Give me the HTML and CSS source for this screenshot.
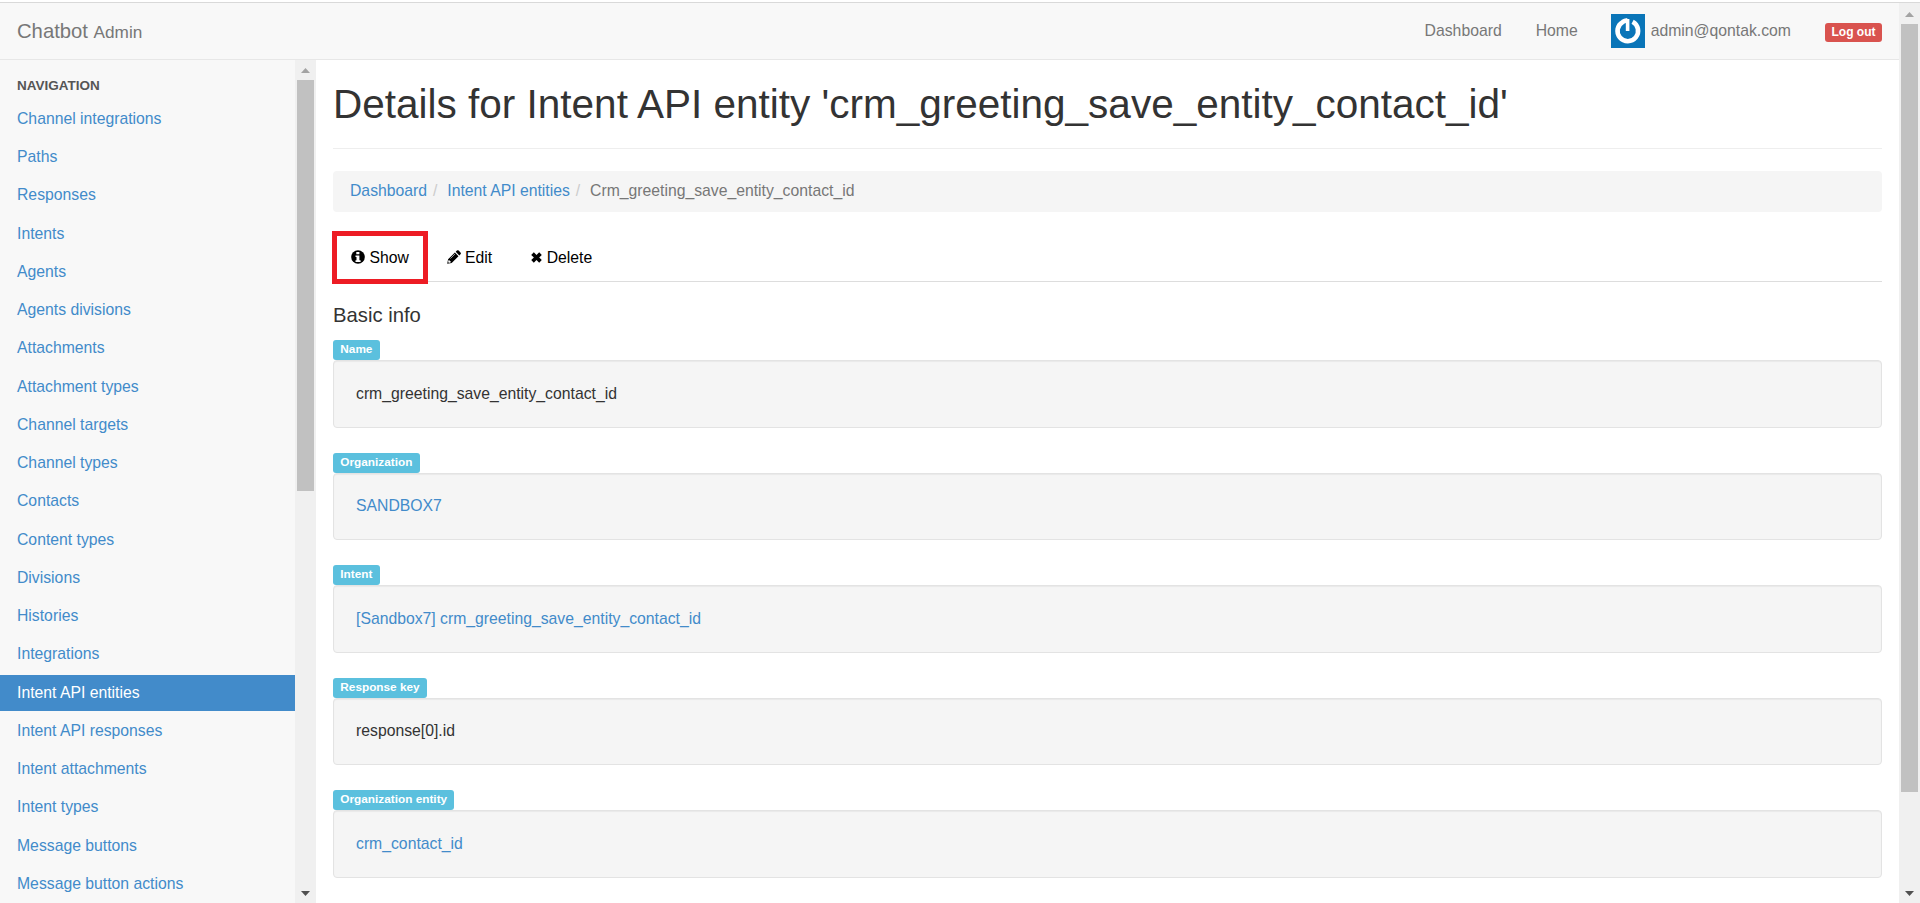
FILE: index.html
```html
<!DOCTYPE html>
<html lang="en">
<head>
<meta charset="utf-8">
<title>Chatbot Admin</title>
<link rel="stylesheet" href="styles.css">
</head>
<body>
<div class="window">
  <div class="page">
    <header class="navbar">
      <a class="brand">Chatbot <small>Admin</small></a>
      <nav class="top-links">
        <a class="link-dashboard">Dashboard</a>
        <a class="link-home">Home</a>
        <a class="user">
          <svg class="avatar" viewBox="0 0 34 34"><rect width="34" height="34" fill="#0a75b8"/><path d="M21.600 7.800A10.300 10.300 0 1 1 11.800 7.900Q13.500 6.600 16.500 6.200" fill="none" stroke="#fff" stroke-width="4.600"/><path d="M16.600 5v12" fill="none" stroke="#fff" stroke-width="3.600"/></svg>
          <span class="email">admin@qontak.com</span>
        </a>
        <a class="logout">Log out</a>
      </nav>
    </header>
    <div class="columns">
      <aside class="sidebar">
        <div class="nav-heading">NAVIGATION</div>
        <ul class="nav-list">
          <li>Channel integrations</li>
          <li>Paths</li>
          <li>Responses</li>
          <li>Intents</li>
          <li>Agents</li>
          <li>Agents divisions</li>
          <li>Attachments</li>
          <li>Attachment types</li>
          <li>Channel targets</li>
          <li>Channel types</li>
          <li>Contacts</li>
          <li>Content types</li>
          <li>Divisions</li>
          <li>Histories</li>
          <li>Integrations</li>
          <li class="active">Intent API entities</li>
          <li>Intent API responses</li>
          <li>Intent attachments</li>
          <li>Intent types</li>
          <li>Message buttons</li>
          <li>Message button actions</li>
        </ul>
      </aside>
      <div class="scrollbar side-scroll">
        <svg class="arrow" viewBox="0 0 9 5"><path d="M0 5L4.500 0L9 5z" fill="#a3a3a3"/></svg>
        <div class="thumb"></div>
        <svg class="arrow" viewBox="0 0 9 5"><path d="M0 0L4.500 5L9 0z" fill="#505050"/></svg>
      </div>
      <main class="content">
        <h1><span class="title">Details for Intent API entity 'crm_greeting_save_entity_contact_id'</span></h1>
        <div class="breadcrumb">
          <a>Dashboard</a><i>/</i><a>Intent API entities</a><i>/</i><span>Crm_greeting_save_entity_contact_id</span>
        </div>
        <div class="tabs">
          <a class="tab tab-show"><svg class="ico" viewBox="0 0 14 14"><circle cx="7" cy="7" r="6.800"/><path d="M5.300 2h3.100v2.200H5.300zM4.500 5.400h3.900v4.800h1.200v1.700H4.500v-1.700h1V7.100h-1z" fill="#fff"/></svg><span>Show</span></a>
          <a class="tab tab-edit"><svg class="ico" viewBox="0 0 14 14"><path d="M.2 13.800l.9-4.500 6.800-6.700 3.600 3.600-6.800 6.700zM8.700 1.800l1.200-1.200q.9-.9 1.800 0l1.800 1.800q.9.900 0 1.800l-1.200 1.200z"/><path d="M1.900 10.300l1.800 1.800-1.800.500-.5-.500zM3.400 8.600l4.700-4.700" fill="#fff" stroke="#fff" stroke-width=".6"/></svg><span>Edit</span></a>
          <a class="tab tab-delete"><svg class="ico ico-x" viewBox="0 0 11 11"><path d="M2.800.3L5.500 3 8.200.3 10.800 2.900 8.200 5.500l2.600 2.600-2.600 2.600L5.500 8.100l-2.700 2.600L.2 8.100l2.700-2.600L.2 2.900z"/></svg><span>Delete</span></a>
        </div>
        <h2>Basic info</h2>
        <section class="field"><b class="label"><span>Name</span></b><div class="well"><span>crm_greeting_save_entity_contact_id</span></div></section>
        <section class="field"><b class="label"><span>Organization</span></b><div class="well"><a>SANDBOX7</a></div></section>
        <section class="field"><b class="label"><span>Intent</span></b><div class="well"><a>[Sandbox7] crm_greeting_save_entity_contact_id</a></div></section>
        <section class="field"><b class="label"><span>Response key</span></b><div class="well"><span>response[0].id</span></div></section>
        <section class="field"><b class="label"><span>Organization entity</span></b><div class="well"><a>crm_contact_id</a></div></section>
      </main>
    </div>
  </div>
  <div class="scrollbar page-scroll">
    <svg class="arrow" viewBox="0 0 9 5"><path d="M0 5L4.500 0L9 5z" fill="#a3a3a3"/></svg>
    <div class="thumb"></div>
    <svg class="arrow" viewBox="0 0 9 5"><path d="M0 0L4.500 5L9 0z" fill="#505050"/></svg>
  </div>
</div>
</body>
</html>
```
FILE: styles.css
```css
* { box-sizing: border-box; }
html, body { margin: 0; height: 903px; overflow: hidden; }
body {
  padding-top: 2px;
  background: #fff;
  color: #333;
  font: 15.75px/22.5px "Liberation Sans", Arial, sans-serif;
}
.window { display: flex; height: 901px; border-top: 1px solid #d9d9d9; }
.page { flex: 1; min-width: 0; display: flex; flex-direction: column; }
.navbar {
  display: flex;
  justify-content: space-between;
  align-items: center;
  height: 57px;
  padding: 0 17px;
  background: #f8f8f8;
  border-bottom: 1px solid #e7e7e7;
  color: #777;
  flex: none;
}
.brand { font-size: 20.25px; padding-top: 1px; }
.brand small { font-size: 17.2px; }
.top-links { display: flex; align-items: center; }
.link-home { margin: 0 33px 0 34px; }
.user { display: flex; align-items: center; gap: 6px; }
.avatar { width: 34px; height: 34px; }
.logout {
  margin: 3px 0 0 34px;
  width: 57px;
  height: 19px;
  border-radius: 3px;
  background: #d9534f;
  color: #fff;
  font-size: 12px;
  font-weight: bold;
  line-height: 18px;
  text-align: center;
}
.columns { display: flex; flex: 1; min-height: 0; }
.sidebar { width: 295px; background: #f8f8f8; overflow: hidden; flex: none; }
.nav-heading {
  height: 41.25px;
  padding: 15px 17px 0;
  color: #555;
  font-size: 13.5px;
  font-weight: bold;
}
.nav-list { list-style: none; margin: 0; padding: 0; color: #428bca; }
.nav-list li { height: 36px; margin-bottom: 2.25px; padding: 6.6px 17px 0; }
.nav-list .active { background: #428bca; color: #fff; }
.scrollbar {
  display: flex;
  flex-direction: column;
  align-items: center;
  width: 21px;
  background: #f0f0f0;
  flex: none;
}
.arrow { width: 9px; height: 5px; display: block; flex: none; }
.thumb { width: 17px; background: #c1c1c1; }
.scrollbar .arrow:last-child { margin-top: auto; }
.side-scroll { padding: 8px 0 7px; }
.side-scroll .thumb { height: 411px; margin-top: 7px; }
.page-scroll { padding: 9px 0 7px; }
.page-scroll .thumb { height: 768px; margin-top: 7px; }
.content { flex: 1; min-width: 0; padding: 0 17px; }
h1 {
  height: 89px;
  margin: 0 0 22px;
  padding-top: 22px;
  border-bottom: 1px solid #eee;
  font-size: 40.5px;
  font-weight: normal;
  line-height: 44.5px;
  white-space: nowrap;
}
.breadcrumb {
  display: flex;
  height: 41px;
  padding: 9px 17px 8px;
  border-radius: 4px;
  background: #f5f5f5;
  color: #777;
}
.breadcrumb i { width: 20.2px; padding-left: 6px; color: #ccc; font-style: normal; }
a { color: inherit; }
.breadcrumb a, .well a { color: #428bca; }
.tabs {
  display: flex;
  height: 70px;
  padding-top: 19px;
  border-bottom: 1px solid #ddd;
  color: #000;
}
.tab { display: flex; align-items: center; gap: 4.5px; height: 53px; }
.tab span { padding-top: 1px; }
.tab-show {
  width: 96px;
  margin-left: -1px;
  padding-left: 14px;
  border: 5px solid #ed1c24;
  z-index: 1;
}
.tab-edit { margin-left: 18.5px; }
.tab-delete { margin-left: 39px; }
.ico { width: 14px; height: 14px; flex: none; margin-bottom: 1px; }
.ico-x { width: 11px; height: 11px; margin: 0; }
h2 {
  height: 58px;
  margin: 0;
  padding-top: 21px;
  font-size: 20.25px;
  font-weight: normal;
  line-height: 24px;
}
.field { height: 112.5px; }
.label {
  display: block;
  width: fit-content;
  height: 20.25px;
  padding: 0 7.3px;
  border-radius: 3px;
  background: #5bc0de;
  color: #fff;
  font-size: 11.8px;
  line-height: 18px;
}
.well {
  height: 67.5px;
  padding: 21.5px 22px 0;
  border: 1px solid #e3e3e3;
  border-radius: 4px;
  background: #f5f5f5;
  box-shadow: inset 0 1px 1px rgba(0, 0, 0, .05);
}
```
